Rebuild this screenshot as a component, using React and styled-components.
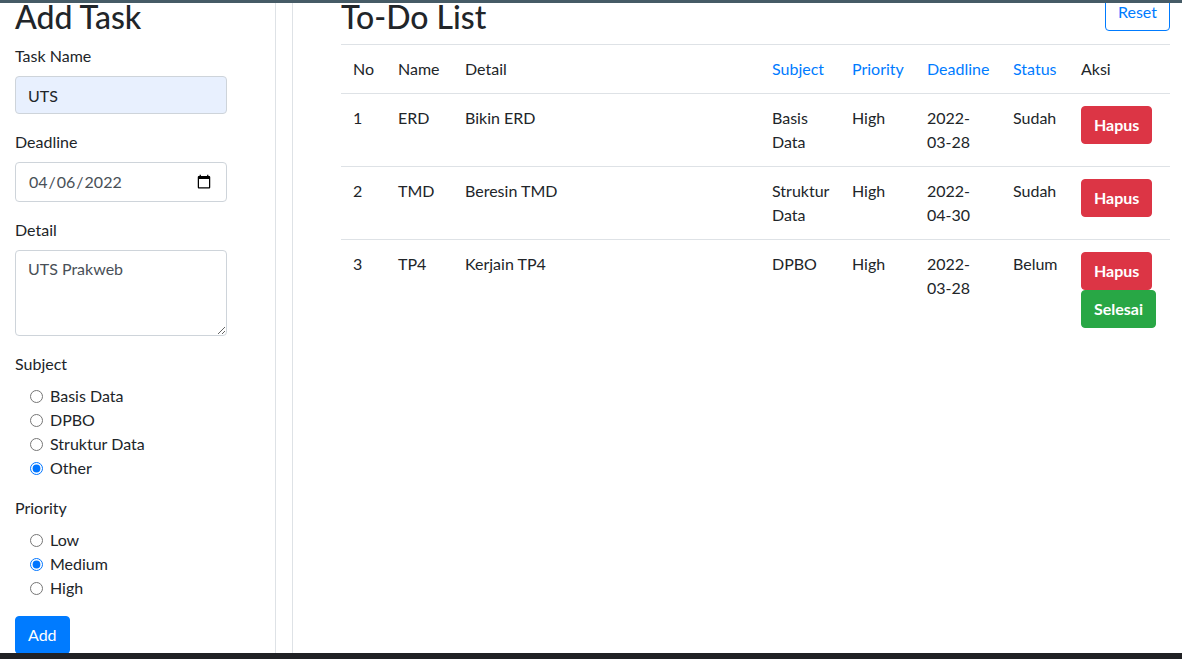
import React from 'react';
import styled, { createGlobalStyle } from 'styled-components';

const GlobalStyle = createGlobalStyle`
  html, body {
    margin: 0;
    padding: 0;
    background: #fff;
    overflow: hidden;
  }
  body {
    font-family: Lato, "Liberation Sans", sans-serif;
    font-size: 16px;
    line-height: 1.5;
    color: #212529;
  }
  * {
    box-sizing: border-box;
  }
`;

const TopBar = styled.div`
  position: fixed;
  top: 0;
  left: 0;
  right: 0;
  height: 3px;
  background: #465b66;
  z-index: 10;
`;

const BottomBar = styled.div`
  position: fixed;
  bottom: 0;
  left: 0;
  right: 0;
  height: 6px;
  background: #202124;
  z-index: 10;
`;

const Page = styled.div`
  display: flex;
  gap: 16px;
  height: 100vh;
`;

const Sidebar = styled.div`
  width: 276px;
  flex-shrink: 0;
  padding: 0 15px;
  border-right: 1px solid #dee2e6;
`;

const Main = styled.div`
  flex: 1;
  padding: 0 12px 0 48px;
  border-left: 1px solid #dee2e6;
`;

const Heading = styled.h2`
  font-size: 32px;
  font-weight: 500;
  line-height: 1.2;
  margin: -2px 0 8px;
`;

const HeaderRow = styled.div`
  display: flex;
  justify-content: space-between;
  align-items: flex-start;
`;

const FormGroup = styled.div`
  margin-bottom: 16px;
`;

const Label = styled.label`
  display: block;
  margin-bottom: 8px;
`;

const Input = styled.input`
  display: block;
  width: 212px;
  height: ${props => props.type === 'date' ? '40px' : '38px'};
  padding: 6px 12px;
  font-family: inherit;
  font-size: 16px;
  line-height: 1.5;
  color: ${props => props.muted ? '#495057' : '#212529'};
  background: ${props => props.autofill ? '#e8f0fe' : '#fff'};
  border: 1px solid #ced4da;
  border-radius: 4px;
  outline: none;
`;

const TextArea = styled.textarea`
  display: block;
  width: 212px;
  height: 86px;
  padding: 6px 12px;
  font-family: inherit;
  font-size: 16px;
  line-height: 1.5;
  color: #495057;
  border: 1px solid #ced4da;
  border-radius: 4px;
  resize: vertical;
  outline: none;
`;

const RadioList = styled.div`
  margin-left: 15px;
`;

const RadioItem = styled.label`
  display: flex;
  align-items: center;
  gap: 7px;
  height: 24px;

  input {
    width: 13px;
    height: 13px;
    margin: 0;
  }
`;

const Button = styled.button`
  display: inline-block;
  padding: 6px 12px;
  font-family: inherit;
  font-size: 16px;
  line-height: 24px;
  font-weight: ${props => props.bold ? 700 : 400};
  color: ${props => props.outline ? props.color : '#fff'};
  background: ${props => props.outline ? 'transparent' : props.color};
  border: 1px solid ${props => props.color};
  border-radius: 4px;
  white-space: nowrap;
  cursor: pointer;
`;

const ResetButton = styled(Button)`
  margin-top: -7px;
`;

const Table = styled.table`
  width: 100%;
  border-collapse: collapse;
  table-layout: fixed;
`;

const Th = styled.th`
  padding: 12px;
  text-align: left;
  font-weight: 400;
  vertical-align: top;
  border-top: 1px solid #dee2e6;
  color: ${props => props.sortable ? '#007bff' : '#212529'};
`;

const Td = styled.td`
  padding: 12px;
  vertical-align: top;
  border-top: 1px solid #dee2e6;
`;

const Actions = styled.div`
  display: flex;
  flex-direction: column;
  align-items: flex-start;
`;

const tasks = [
  { no: 1, name: 'ERD', detail: 'Bikin ERD', subject: 'Basis Data', priority: 'High', deadline: '2022-03-28', status: 'Sudah' },
  { no: 2, name: 'TMD', detail: 'Beresin TMD', subject: 'Struktur Data', priority: 'High', deadline: '2022-04-30', status: 'Sudah' },
  { no: 3, name: 'TP4', detail: 'Kerjain TP4', subject: 'DPBO', priority: 'High', deadline: '2022-03-28', status: 'Belum' },
];

const columns = [
  { label: 'No', width: 45 },
  { label: 'Name', width: 67 },
  { label: 'Detail', width: 307 },
  { label: 'Subject', width: 80, sortable: true },
  { label: 'Priority', width: 75, sortable: true },
  { label: 'Deadline', width: 86, sortable: true },
  { label: 'Status', width: 68, sortable: true },
  { label: 'Aksi', width: 101 },
];

const subjects = ['Basis Data', 'DPBO', 'Struktur Data', 'Other'];
const priorities = ['Low', 'Medium', 'High'];

const App = () => {
  return (
    <>
      <GlobalStyle />
      <TopBar />
      <Page>
        <Sidebar>
          <Heading>Add Task</Heading>
          <FormGroup>
            <Label>Task Name</Label>
            <Input autofill defaultValue="UTS" />
          </FormGroup>
          <FormGroup>
            <Label>Deadline</Label>
            <Input muted type="date" defaultValue="2022-04-06" />
          </FormGroup>
          <FormGroup>
            <Label>Detail</Label>
            <TextArea rows={3} defaultValue="UTS Prakweb" />
          </FormGroup>
          <FormGroup>
            <Label>Subject</Label>
            <RadioList>
              {subjects.map(s => (
                <RadioItem key={s}>
                  <input type="radio" name="subject" defaultChecked={s === 'Other'} /> {s}
                </RadioItem>
              ))}
            </RadioList>
          </FormGroup>
          <FormGroup>
            <Label>Priority</Label>
            <RadioList>
              {priorities.map(p => (
                <RadioItem key={p}>
                  <input type="radio" name="priority" defaultChecked={p === 'Medium'} /> {p}
                </RadioItem>
              ))}
            </RadioList>
          </FormGroup>
          <Button color="#007bff">Add</Button>
        </Sidebar>

        <Main>
          <HeaderRow>
            <Heading>To-Do List</Heading>
            <ResetButton outline color="#007bff">Reset</ResetButton>
          </HeaderRow>
          <Table>
            <colgroup>
              {columns.map(c => <col key={c.label} style={{ width: c.width }} />)}
            </colgroup>
            <thead>
              <tr>
                {columns.map(c => <Th key={c.label} sortable={c.sortable}>{c.label}</Th>)}
              </tr>
            </thead>
            <tbody>
              {tasks.map(t => (
                <tr key={t.no}>
                  <Td>{t.no}</Td>
                  <Td>{t.name}</Td>
                  <Td>{t.detail}</Td>
                  <Td>{t.subject}</Td>
                  <Td>{t.priority}</Td>
                  <Td>{t.deadline}</Td>
                  <Td>{t.status}</Td>
                  <Td>
                    <Actions>
                      <Button bold color="#dc3545">Hapus</Button>
                      {t.status === 'Belum' && <Button bold color="#28a745">Selesai</Button>}
                    </Actions>
                  </Td>
                </tr>
              ))}
            </tbody>
          </Table>
        </Main>
      </Page>
      <BottomBar />
    </>
  );
};

export default App;
